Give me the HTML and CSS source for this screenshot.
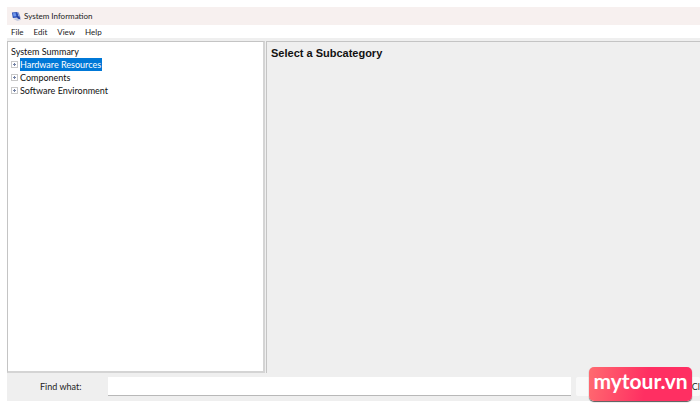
FILE: index.html
```
<!DOCTYPE html>
<html lang="en">
<head>
  <meta charset="utf-8">
  <title>System Information</title>
  <link rel="stylesheet" href="styles.css">
</head>
<body>
  <div class="window">
    <header class="titlebar">
      <svg class="app-icon" viewBox="0 0 12 12" aria-hidden="true">
        <path d="M1 1.500l6-.5 1.500 6-6.500.5z" fill="#2a4fb8"/>
        <path d="M2 2.500l3-.3.8 3.500-3 .3z" fill="#6e97ec"/>
        <path d="M7 1l1.500.5 2 6-2-.5z" fill="#7f93cf"/>
        <path d="M2 8.500l5-.8 4 1.800-4 1.500z" fill="#c3cae0"/>
        <path d="M6 5.500l3 .5 1.500 3-3-.5z" fill="#2440a0"/>
      </svg>
      <span>System Information</span>
    </header>
    <nav class="menubar">
      <button type="button">File</button>
      <button type="button">Edit</button>
      <button type="button">View</button>
      <button type="button">Help</button>
    </nav>
    <main class="panes">
      <ul class="tree">
        <li><span class="label">System Summary</span></li>
        <li><button type="button" class="expand" aria-label="Expand Hardware Resources"></button><span class="label selected">Hardware Resources</span></li>
        <li><button type="button" class="expand" aria-label="Expand Components"></button><span class="label">Components</span></li>
        <li><button type="button" class="expand" aria-label="Expand Software Environment"></button><span class="label">Software Environment</span></li>
      </ul>
      <section class="details">
        <h1>Select a Subcategory</h1>
      </section>
    </main>
    <form class="findbar">
      <label for="findWhat">Find what:</label>
      <input type="text" id="findWhat" name="findWhat">
      <button type="button" class="find" aria-label="Find"></button>
      <button type="button" class="close" aria-label="Close Find">Cl</button>
    </form>
  </div>
  <div class="watermark">mytour.vn</div>
</body>
</html>
```
FILE: styles.css
```
* {
  box-sizing: border-box;
}
body {
  margin: 0;
  height: 100vh;
  padding: 7px 0 10px 7px;
  overflow: hidden;
  position: relative;
  background-color: #fff;
  color: #222;
  font-family: Lato, "Open Sans", sans-serif;
  font-size: 9px;
}
button {
  padding: 0;
  border: 0;
  background: none;
  color: inherit;
  font: inherit;
}
.window {
  height: 100%;
  display: flex;
  flex-direction: column;
  background-color: #efefef;
}
.titlebar {
  height: 18px;
  padding: 0 4px;
  display: flex;
  align-items: center;
  gap: 2px;
  background-color: #f7f0ef;
  font-size: 8px;
}
.app-icon {
  width: 11px;
  height: 11px;
}
.menubar {
  height: 13px;
  padding: 0 4px;
  display: flex;
  align-items: center;
  gap: 10px;
  background-color: #fff;
  font-size: 8px;
}
.panes {
  flex: 1;
  min-height: 0;
  margin-top: 3px;
  display: grid;
  grid-template-columns: 258px 1fr;
  gap: 1px;
}
.tree {
  margin: 0;
  padding: 3px;
  list-style: none;
  background-color: #fff;
  border: 1px solid #c4c4c4;
  border-right: 2px solid #d4d4d4;
  border-bottom: 2px solid #d4d4d4;
}
.tree li {
  height: 13px;
  line-height: 13px;
  display: flex;
  align-items: center;
  gap: 2px;
}
.label {
  color: #111;
}
.selected {
  padding-right: 1px;
  background-color: #0078d7;
  color: #fff;
}
.expand {
  width: 7px;
  height: 7px;
  border: 1px solid #c8c8c8;
  background: linear-gradient(#7482a4, #7482a4) center / 3px 1px no-repeat, linear-gradient(#7482a4, #7482a4) center / 1px 3px no-repeat;
}
.details {
  padding: 4px;
  border-top: 1px solid #c4c4c4;
  border-left: 1px solid #c4c4c4;
}
h1 {
  margin: 0;
  font: bold 11px/14px "Liberation Sans", Arial, sans-serif;
  color: #111;
}
.findbar {
  height: 28px;
  padding: 4px 0 5px 33px;
  display: flex;
  gap: 5px;
}
.findbar label {
  width: 63px;
  line-height: 19px;
}
.findbar input {
  flex: 1;
  min-width: 0;
  padding: 0 4px;
  border: 0;
  border-bottom: 1px solid #b8b8b8;
  background-color: #fff;
  font: inherit;
}
.findbar button {
  background-color: #f9f9f9;
  border-radius: 2px;
}
.find {
  width: 84px;
}
.close {
  width: 35px;
  text-align: right;
}
.watermark {
  position: absolute;
  right: 8px;
  bottom: 10px;
  width: 103px;
  height: 34px;
  border-radius: 5px;
  background: linear-gradient(100deg, #ff6b70, #ff2f62 55%);
  box-shadow: 0 1px 1px #555;
  color: #fff;
  font: bold 21px/28px Lato, sans-serif;
  text-align: center;
}
```
